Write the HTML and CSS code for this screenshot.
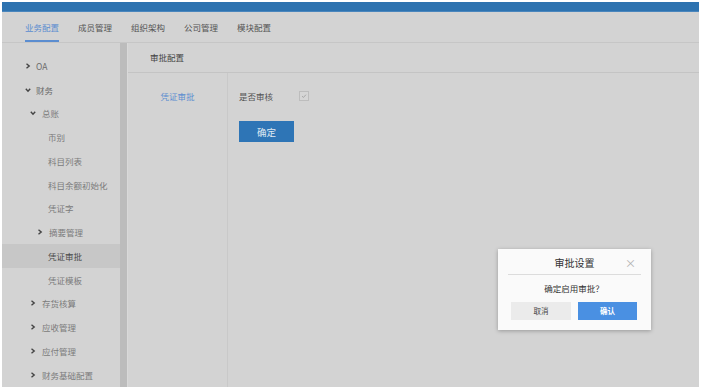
FILE: index.html
```html
<!DOCTYPE html>
<html>
	<head>
		<meta charset="UTF-8">
		<title>审批配置</title>
		<link rel="stylesheet" href="styles.css">
	</head>
	<body>
		<div class="app">
			<div class="topbar"></div>
			<div class="tabs">
				<span class="tab active">业务配置</span>
				<span class="tab">成员管理</span>
				<span class="tab">组织架构</span>
				<span class="tab">公司管理</span>
				<span class="tab">模块配置</span>
			</div>
			<div class="main">
				<div class="sidebar">
					<div class="nav lv1"><i class="arrow"><svg viewBox="0 0 6 6"><path d="M1.5 0.8 L4.2 3 L1.5 5.2"/></svg></i>OA</div>
					<div class="nav lv1"><i class="arrow"><svg viewBox="0 0 6 6"><path d="M0.8 1.8 L3 4.2 L5.2 1.8"/></svg></i>财务</div>
					<div class="nav lv2"><i class="arrow"><svg viewBox="0 0 6 6"><path d="M0.8 1.8 L3 4.2 L5.2 1.8"/></svg></i>总账</div>
					<div class="nav lv3">币别</div>
					<div class="nav lv3">科目列表</div>
					<div class="nav lv3">科目余额初始化</div>
					<div class="nav lv3">凭证字</div>
					<div class="nav lv3a"><i class="arrow"><svg viewBox="0 0 6 6"><path d="M1.5 0.8 L4.2 3 L1.5 5.2"/></svg></i>摘要管理</div>
					<div class="nav lv3 current">凭证审批</div>
					<div class="nav lv3">凭证模板</div>
					<div class="nav lv2"><i class="arrow"><svg viewBox="0 0 6 6"><path d="M1.5 0.8 L4.2 3 L1.5 5.2"/></svg></i>存货核算</div>
					<div class="nav lv2"><i class="arrow"><svg viewBox="0 0 6 6"><path d="M1.5 0.8 L4.2 3 L1.5 5.2"/></svg></i>应收管理</div>
					<div class="nav lv2"><i class="arrow"><svg viewBox="0 0 6 6"><path d="M1.5 0.8 L4.2 3 L1.5 5.2"/></svg></i>应付管理</div>
					<div class="nav lv2"><i class="arrow"><svg viewBox="0 0 6 6"><path d="M1.5 0.8 L4.2 3 L1.5 5.2"/></svg></i>财务基础配置</div>
				</div>
				<div class="scrollbar"></div>
				<div class="content">
					<div class="content-head">审批配置</div>
					<div class="content-body">
						<div class="sub-menu">
							<div class="sub-item">凭证审批</div>
						</div>
						<div class="form">
							<div class="form-row">
								<span class="label">是否审核</span>
								<span class="checkbox"><svg viewBox="0 0 10 10"><path d="M2.6 5.2 L4.3 6.8 L7.4 3.4"/></svg></span>
							</div>
							<button class="btn-ok">确定</button>
						</div>
					</div>
				</div>
			</div>

			<!-- 审批设置弹窗 -->
			<div class="dialog">
				<div class="dialog-title">审批设置<span class="close">×</span></div>
				<div class="dialog-msg">确定启用审批？</div>
				<div class="dialog-btns">
					<span class="btn-cancel">取消</span>
					<span class="btn-confirm">确认</span>
				</div>
			</div>
		</div>
	</body>
</html>
```

FILE: styles.css
```css
*{margin: 0;padding: 0;box-sizing: border-box;}
body{
	background: #fff;
	padding: 2px;
	font-family: "Noto Sans CJK SC", "Microsoft YaHei", sans-serif;
	font-size: 8.5px;
}
.app{
	position: relative;
	width: 697px;
	height: 385px;
	background: #d3d3d3;
	display: flex;
	flex-direction: column;
	overflow: hidden;
}
.topbar{
	height: 10px;
	background: #2e73b0;
	border-bottom: 1px solid #4a86bd;
	flex: none;
}
.tabs{
	height: 31px;
	display: flex;
	padding-left: 23px;
	border-bottom: 1px solid #c6c6c6;
	flex: none;
}
.tab{
	height: 30px;
	line-height: 30px;
	margin-right: 19px;
	color: #555;
	white-space: nowrap;
	border-bottom: 2px solid transparent;
}
.tab.active{
	color: #5b8dd0;
	border-bottom-color: #5b8dd0;
}
.main{
	flex: 1;
	display: flex;
}
.sidebar{
	width: 118px;
	padding-top: 11px;
	flex: none;
}
.nav{
	height: 23.75px;
	display: flex;
	align-items: center;
	color: #7b7b7b;
	white-space: nowrap;
}
.nav.lv1{padding-left: 23px;color: #6a6a6a;}
.nav.lv2{padding-left: 28px;}
.nav.lv3{padding-left: 46px;}
.nav.lv3a{padding-left: 35px;}
.nav.current{
	background: #c7c7c7;
	color: #4a4a4a;
}
.arrow{
	width: 11px;
	flex: none;
	display: flex;
	align-items: center;
}
.lv2 .arrow,.lv3a .arrow{width: 12px;}
.arrow svg{
	width: 6px;
	height: 6px;
	fill: none;
	stroke: #444;
	stroke-width: 1.4;
}
.scrollbar{
	width: 7px;
	background: #bcbcbc;
	flex: none;
}
.content{
	flex: 1;
	display: flex;
	flex-direction: column;
	border-left: 1px solid #d9d9d9;
}
.content-head{
	height: 30px;
	line-height: 28px;
	padding-left: 22px;
	color: #444;
	border-bottom: 1px solid #c4c4c4;
	flex: none;
}
.content-body{
	flex: 1;
	display: flex;
}
.sub-menu{
	width: 100px;
	border-right: 1px solid #c9c9c9;
	padding-top: 16px;
	flex: none;
}
.sub-item{
	text-align: center;
	color: #5b8dd0;
	line-height: 14px;
}
.form{
	padding-left: 11px;
	padding-top: 16px;
}
.form-row{
	display: flex;
	align-items: center;
	height: 14px;
	color: #555;
}
.label{
	width: 60px;
}
.checkbox{
	width: 10px;
	height: 10px;
	border: 1px solid #bdbdbd;
	background: #d6d6d6;
	display: flex;
}
.checkbox svg{
	width: 8px;
	height: 8px;
	fill: none;
	stroke: #9a9a9a;
	stroke-width: 1;
}
.btn-ok{
	margin-top: 18px;
	width: 55px;
	height: 21px;
	border: none;
	background: #2e75b6;
	color: #dfe8f2;
	font-family: inherit;
	font-size: 9.5px;
}
.dialog{
	position: absolute;
	left: 496px;
	top: 247px;
	width: 153px;
	height: 81px;
	background: #fafafa;
	box-shadow: 0 1px 4px rgba(0,0,0,.28);
	padding: 0 14px 0 13px;
}
.dialog-title{
	position: relative;
	height: 26px;
	line-height: 28px;
	text-align: center;
	font-size: 10px;
	color: #333;
	border-bottom: 1px solid #dcdcdc;
	margin: 0 -4px 0 -3px;
}
.close{
	position: absolute;
	right: 5px;
	top: 0;
	color: #b0b0b0;
	font-size: 11px;
}
.dialog-msg{
	height: 27px;
	line-height: 27px;
	text-align: center;
	color: #333;
}
.dialog-btns{
	display: flex;
	gap: 7px;
}
.btn-cancel,.btn-confirm{
	width: 60px;
	height: 18px;
	line-height: 18px;
	text-align: center;
	font-size: 7.5px;
}
.btn-cancel{
	background: #ebebeb;
	color: #444;
}
.btn-confirm{
	width: 59px;
	background: #4a90e2;
	color: #fff;
	font-weight: bold;
}
```
